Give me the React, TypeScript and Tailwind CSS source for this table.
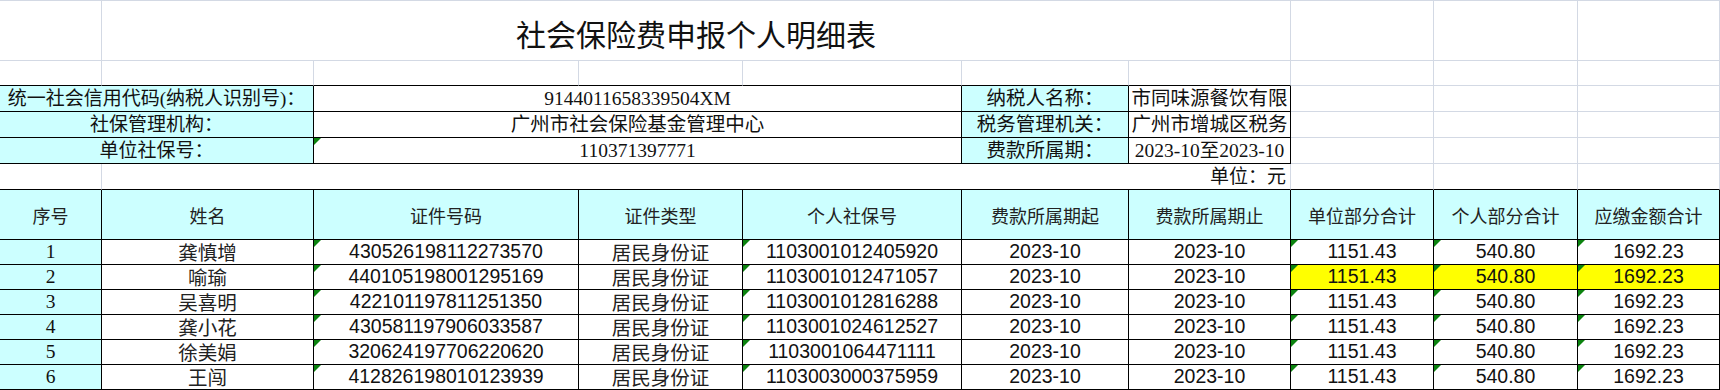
import React from 'react';

const CJK = "font-['Noto_Sans_CJK_SC',sans-serif]";
const SERIF = "font-['Liberation_Serif','Noto_Sans_CJK_SC',serif]";
const ARIAL = "font-['Liberation_Sans',Arial,sans-serif]";

const GRID = 'border-[#d3d9e4]';
const BLACK = 'border-black';
const EDGE = 'border-b-black border-r-[#d3d9e4]';
const CYAN = 'bg-[#ccffff]';

type Row = {
  no: number;
  name: string;
  idNo: string;
  ssNo: string;
  highlight?: boolean;
};

const ROWS: Row[] = [
  { no: 1, name: '龚慎增', idNo: '430526198112273570', ssNo: '1103001012405920' },
  { no: 2, name: '喻瑜', idNo: '440105198001295169', ssNo: '1103001012471057', highlight: true },
  { no: 3, name: '吴喜明', idNo: '422101197811251350', ssNo: '1103001012816288' },
  { no: 4, name: '龚小花', idNo: '430581197906033587', ssNo: '1103001024612527' },
  { no: 5, name: '徐美娟', idNo: '320624197706220620', ssNo: '1103001064471111' },
  { no: 6, name: '王闯', idNo: '412826198010123939', ssNo: '1103003000375959' },
];

const HEADERS = ['序号', '姓名', '证件号码', '证件类型', '个人社保号', '费款所属期起', '费款所属期止', '单位部分合计', '个人部分合计', '应缴金额合计'];

const INFO = [
  { label: '统一社会信用代码(纳税人识别号)：', value: '9144011658339504XM', label2: '纳税人名称：', value2: '市同味源餐饮有限', mark: false },
  { label: '社保管理机构：', value: '广州市社会保险基金管理中心', label2: '税务管理机关：', value2: '广州市增城区税务', mark: false },
  { label: '单位社保号：', value: '110371397771', label2: '费款所属期：', value2: '2023-10至2023-10', mark: true },
];

// little green "number stored as text" corner
function Mark() {
  return (
    <svg className="absolute top-0 left-0" width="7" height="7" viewBox="0 0 7 7">
      <polygon points="0,0 7,0 0,7" fill="#0b830f" />
    </svg>
  );
}

function Cell({ className = '', mark = false, children }: { className?: string; mark?: boolean; children?: React.ReactNode }) {
  return (
    <div className={`relative flex items-center justify-center overflow-hidden whitespace-nowrap border-r border-b leading-none ${className}`}>
      {mark && <Mark />}
      {children}
    </div>
  );
}

export default function App() {
  return (
    <div className="w-[1720px] bg-white text-[#111]">
      <div className="grid grid-cols-[102px_212px_265px_164px_219px_167px_162px_143px_144px_142px] grid-rows-[60px_25px_26px_26px_26px_26px_50px_25px_25px_25px_25px_25px_25px] border-t border-[#d3d9e4]">
        {/* title */}
        <Cell className={GRID} />
        <Cell className={`col-span-6 pt-1 text-[30px] ${CJK} ${GRID}`}>社会保险费申报个人明细表</Cell>
        <Cell className={GRID} />
        <Cell className={GRID} />
        <Cell className={GRID} />

        {/* spacer row */}
        <Cell className={EDGE} />
        <Cell className={EDGE} />
        <Cell className={EDGE} />
        <Cell className={EDGE} />
        <Cell className={EDGE} />
        <Cell className={EDGE} />
        <Cell className={EDGE} />
        <Cell className={GRID} />
        <Cell className={GRID} />
        <Cell className={GRID} />

        {INFO.map((info) => (
          <React.Fragment key={info.label}>
            <Cell className={`col-span-2 text-[19px] ${SERIF} ${CYAN} ${BLACK}`}>{info.label}</Cell>
            <Cell mark={info.mark} className={`col-span-3 text-[19.5px] ${SERIF} ${BLACK}`}>{info.value}</Cell>
            <Cell className={`text-[19.5px] ${SERIF} ${CYAN} ${BLACK}`}>{info.label2}</Cell>
            <Cell className={`text-[19.5px] ${SERIF} ${BLACK}`}>{info.value2}</Cell>
            <Cell className={GRID} />
            <Cell className={GRID} />
            <Cell className={GRID} />
          </React.Fragment>
        ))}

        {/* unit row */}
        <Cell className={EDGE} />
        <Cell className={`col-span-6 justify-end pr-1 text-[19px] ${SERIF} ${EDGE}`}>单位：元</Cell>
        <Cell className={EDGE} />
        <Cell className={EDGE} />
        <Cell className={EDGE} />

        {/* header */}
        {HEADERS.map((h) => (
          <Cell key={h} className={`text-[18px] text-[#222] ${CJK} ${CYAN} ${BLACK}`}>
            {h}
          </Cell>
        ))}

        {ROWS.map((row) => {
          const money = row.highlight ? 'bg-[#ffff00]' : '';
          return (
            <React.Fragment key={row.no}>
              <Cell className={`text-[19.5px] ${SERIF} ${CYAN} ${BLACK}`}>{row.no}</Cell>
              <Cell className={`text-[19.5px] text-[#222] ${CJK} ${BLACK}`}>{row.name}</Cell>
              <Cell mark className={`text-[19.5px] ${ARIAL} ${BLACK}`}>{row.idNo}</Cell>
              <Cell className={`text-[19.5px] text-[#222] ${CJK} ${BLACK}`}>居民身份证</Cell>
              <Cell mark className={`text-[19.5px] ${ARIAL} ${BLACK}`}>{row.ssNo}</Cell>
              <Cell className={`text-[19.5px] ${ARIAL} ${BLACK}`}>2023-10</Cell>
              <Cell className={`text-[19.5px] ${ARIAL} ${BLACK}`}>2023-10</Cell>
              <Cell mark className={`text-[19.5px] ${ARIAL} ${BLACK} ${money}`}>1151.43</Cell>
              <Cell mark className={`text-[19.5px] ${ARIAL} ${BLACK} ${money}`}>540.80</Cell>
              <Cell mark className={`text-[19.5px] ${ARIAL} ${BLACK} ${money}`}>1692.23</Cell>
            </React.Fragment>
          );
        })}
      </div>
    </div>
  );
}
